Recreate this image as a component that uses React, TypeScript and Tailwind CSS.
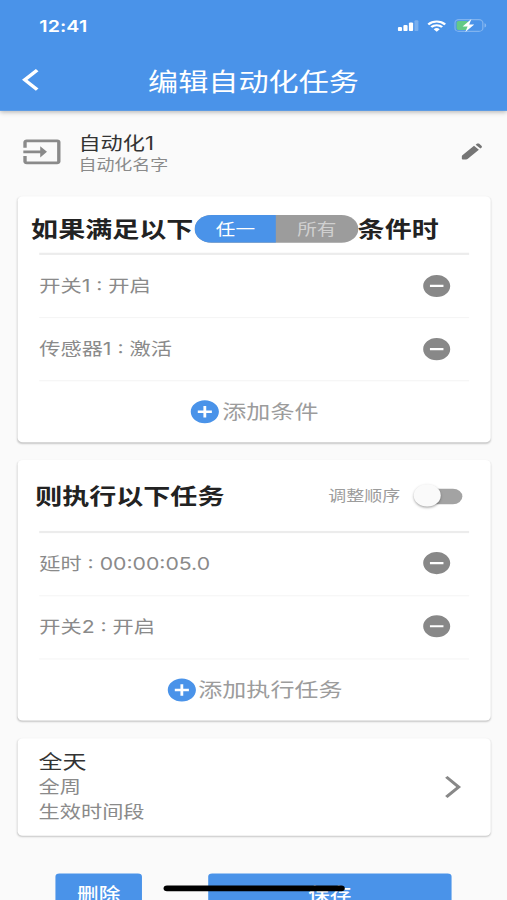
import React, { useState } from 'react';
import { MdAddCircle, MdArrowForwardIos, MdInput, MdRemoveCircle } from 'react-icons/md';

const StatusBar = () => (
  <div className="flex h-11 items-start justify-between pt-[13px] pr-[15px] pl-[29px] text-white">
    <span className="pt-px text-[14.5px] leading-5 font-semibold tracking-[0.1px]">12:41</span>
    <div className="flex items-center gap-[6px] pt-[4px]">
      <svg width="16" height="10" viewBox="0 0 17 11" fill="currentColor">
        <rect x="0" y="7" width="3.4" height="4" rx="1" />
        <rect x="4.5" y="5" width="3.4" height="6" rx="1" />
        <rect x="9" y="2.5" width="3.4" height="8.5" rx="1" />
        <rect x="13.5" y="0.3" width="3.2" height="10.7" rx="1" opacity="0.25" />
      </svg>
      <svg width="14" height="11" viewBox="0 0 15 11" fill="none" stroke="currentColor" strokeWidth="2">
        <path d="M0.8 3.9a9.6 9.6 0 0 1 13.4 0" />
        <path d="M3.2 6.5a6.1 6.1 0 0 1 8.6 0" />
        <path d="M7.5 11 5.1 8.5a3.5 3.5 0 0 1 4.8 0z" fill="currentColor" stroke="none" />
      </svg>
      <svg width="24" height="12" viewBox="0 0 25 12">
        <rect x="0.5" y="0.5" width="21.5" height="11" rx="3" fill="none" stroke="#fff" strokeOpacity="0.3" />
        <path d="M23.3 4v4c.8-.3 1.3-1.1 1.3-2s-.5-1.7-1.3-2z" fill="#fff" fillOpacity="0.35" />
        <rect x="1.8" y="1.8" width="9" height="8.4" rx="1.5" fill="#64c987" />
        <path d="M13.2 0 6.4 6.9h3.9L8.5 12l6.9-6.9h-3.9z" fill="#fff" />
      </svg>
    </div>
  </div>
);

const PencilIcon = () => (
  <svg className="mr-px" width="16" height="16" viewBox="0 0 16 16" fill="#757575">
    <path d="M9.6 2.6 13.2 6.2 4.8 14.5c-.3.3-.6.4-1 .4H1.6c-.6 0-1-.4-1-1v-1.9c0-.4.1-.7.4-1z" />
    <path d="M10.8 1.5 11.7.8c.5-.5 1.3-.5 1.8 0l1.6 1.6c.5.5.5 1.3 0 1.8l-.8.8z" />
  </svg>
);

const ItemRow = ({ text }: { text: string }) => (
  <div className="mx-4 flex h-[57px] items-center justify-between border-b border-[#f5f5f5] pr-3 pb-px">
    <span className="pt-px pl-[0.5px] text-[15.7px] whitespace-pre text-[#8a8a8a]">{text}</span>
    <button>
      <MdRemoveCircle className="text-[24px] text-[#888888]" />
    </button>
  </div>
);

const AddRow = ({ text }: { text: string }) => (
  <button className="flex h-[55px] w-full items-center justify-center text-[17.8px] text-[#9c9c9c]">
    <MdAddCircle className="text-[25px] text-[#4a93e9]" />
    <span className="pt-0.5">{text}</span>
  </button>
);

const App = () => {
  const [matchAny, setMatchAny] = useState(true);
  const [sorting, setSorting] = useState(false);

  return (
    <div className="h-[900px] w-[507px] overflow-hidden bg-[#fafafa]">
      {/* 375x812 phone screen, stretched over the window */}
      <div className="relative flex h-[812px] w-[375px] origin-top-left scale-x-[1.352] scale-y-[1.1084] flex-col overflow-hidden bg-[#fafafa] font-['Inter','Noto_Sans_CJK_SC',sans-serif]">
        <header className="h-[100px] shrink-0 bg-[#4a93e9] shadow-[0_1px_4px_rgba(0,0,0,0.3)]">
          <StatusBar />
          <div className="grid h-14 grid-cols-[56px_1fr_56px] items-center text-white">
            <button className="pl-4">
              <svg width="13" height="20" viewBox="0 0 13 20" fill="none" stroke="currentColor" strokeWidth="2.8">
                <path d="M11.5 1.2 2.3 10l9.2 8.8" />
              </svg>
            </button>
            <h1 className="pt-[3px] text-center text-[22.3px] font-normal">编辑自动化任务</h1>
          </div>
        </header>

        <section className="flex h-[77px] shrink-0 items-center pr-[17px] pb-[4px] pl-4">
          <MdInput className="text-[30px] text-[#8a8a8a]" />
          <div className="ml-3 flex-1 pt-[3px]">
            <div className="text-[16.4px] leading-5 text-[#333]">自动化1</div>
            <div className="text-[13.3px] leading-[19px] text-[#8a8a8a]">自动化名字</div>
          </div>
          <PencilIcon />
        </section>

        <section className="mx-[12.5px] h-[222px] shrink-0 rounded bg-white shadow-[0_1px_1.5px_rgba(0,0,0,0.2)]">
          <div className="flex h-[51px] items-center pt-2 pl-[10.5px] text-[20px] font-bold text-[#222]">
            <span>如果满足以下</span>
            <div className="ml-px flex h-[25px] w-[120.5px] overflow-hidden rounded-full bg-[#9c9c9c] text-[14.5px] font-normal">
              <button className="flex-1 bg-[#4a93e9] text-white" onClick={() => setMatchAny(true)} aria-pressed={matchAny}>
                任一
              </button>
              <button className="flex-1 text-[#d0d0d0]" onClick={() => setMatchAny(false)} aria-pressed={!matchAny}>
                所有
              </button>
            </div>
            <span>条件时</span>
          </div>
          <div className="mx-4 border-b-2 border-[#ececec]" />
          <ItemRow text="开关1 : 开启" />
          <ItemRow text="传感器1 : 激活" />
          <AddRow text="添加条件" />
        </section>

        <section className="mx-[12.5px] mt-4 h-[235px] shrink-0 rounded bg-white shadow-[0_1px_1.5px_rgba(0,0,0,0.2)]">
          <div className="flex h-[63.5px] items-center pt-[2px] pr-[20.5px] pl-[13.5px]">
            <h2 className="flex-1 text-[20px] font-bold text-[#222]">则执行以下任务</h2>
            <span className="mr-2.5 text-[13.3px] text-[#9c9c9c]">调整顺序</span>
            <button
              className="flex h-5 w-9 items-center"
              role="switch"
              aria-checked={sorting}
              onClick={() => setSorting(!sorting)}
            >
              <span className="relative ml-0.5 block h-3.5 w-[34px] rounded-full bg-[#a3a3a3]">
                <span className="absolute -top-[3.5px] -left-[2.5px] h-5 w-5 rounded-full bg-[#fafafa] shadow-[0_1px_2px_rgba(0,0,0,0.35)]" />
              </span>
            </button>
          </div>
          <div className="mx-4 border-b-2 border-[#ececec]" />
          <ItemRow text="延时 : 00:00:05.0" />
          <ItemRow text="开关2 : 开启" />
          <AddRow text="添加执行任务" />
        </section>

        <section className="mx-[12.5px] mt-4 flex h-[88px] shrink-0 items-center justify-between rounded bg-white pr-4 pl-4 shadow-[0_1px_1.5px_rgba(0,0,0,0.2)]">
          <div className="pt-px text-[15.7px] leading-[22.5px] text-[#8a8a8a]">
            <div className="text-[17.8px] text-[#333]">全天</div>
            <div>全周</div>
            <div>生效时间段</div>
          </div>
          <MdArrowForwardIos className="text-[24px] text-[#888]" />
        </section>

        <footer className="mt-[34px] flex shrink-0 gap-[49px] pl-[41px] text-base font-medium text-white">
          <button className="h-9 w-16 rounded-[3px] bg-[#4a93e9] pt-0.5">删除</button>
          <button className="h-9 w-[180px] rounded-[3px] bg-[#4a93e9] pt-0.5">保存</button>
        </footer>

        <div className="absolute top-[799px] left-[121px] h-[5px] w-[134px] rounded-full bg-black" />
      </div>
    </div>
  );
};

export default App;
